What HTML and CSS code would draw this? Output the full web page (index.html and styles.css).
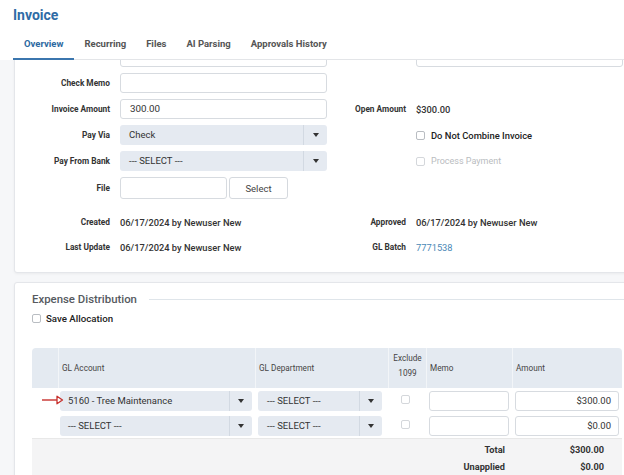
FILE: index.html
```html
<!DOCTYPE html>
<html lang="en">
<head>
<meta charset="utf-8">
<title>Invoice</title>
<link rel="stylesheet" href="styles.css">
</head>
<body>
<header class="top">
  <h1 class="title">Invoice</h1>
  <nav class="tabs">
    <span class="tab active">Overview</span>
    <span class="tab">Recurring</span>
    <span class="tab">Files</span>
    <span class="tab">AI Parsing</span>
    <span class="tab">Approvals History</span>
  </nav>
</header>

<main class="viewport">
  <section class="card details">
    <div class="form-grid">
      <span></span><div class="input"></div>
      <span></span><div class="input"></div>

      <span class="lbl">Check Memo</span><div class="input"></div>
      <span></span><span></span>

      <span class="lbl">Invoice Amount</span><div class="input">300.00</div>
      <span class="lbl">Open Amount</span><span class="val">$300.00</span>

      <span class="lbl">Pay Via</span>
      <div class="select"><span class="sel-val">Check</span><span class="caret-box"><i class="caret"></i></span></div>
      <span></span>
      <label class="check strong"><i class="box"></i>Do Not Combine Invoice</label>

      <span class="lbl">Pay From Bank</span>
      <div class="select"><span class="sel-val">--- SELECT ---</span><span class="caret-box"><i class="caret"></i></span></div>
      <span></span>
      <label class="check disabled"><i class="box"></i>Process Payment</label>

      <span class="lbl">File</span>
      <div class="file-row"><div class="input file-input"></div><button class="btn">Select</button></div>
      <span></span><span></span>
    </div>

    <div class="info-grid">
      <span class="lbl">Created</span><span class="val">06/17/2024 by Newuser New</span>
      <span class="lbl">Approved</span><span class="val">06/17/2024 by Newuser New</span>
      <span class="lbl">Last Update</span><span class="val">06/17/2024 by Newuser New</span>
      <span class="lbl">GL Batch</span><a class="link">7771538</a>
    </div>
  </section>

  <section class="card expense">
    <div class="legend"><span class="legend-text">Expense Distribution</span><span class="legend-line"></span></div>
    <label class="check save"><i class="box"></i>Save Allocation</label>

    <table class="dist">
      <colgroup>
        <col class="c0"><col class="c1"><col class="c2"><col class="c3"><col class="c4"><col class="c5">
      </colgroup>
      <thead>
        <tr>
          <th></th>
          <th>GL Account</th>
          <th>GL Department</th>
          <th class="center excl">Exclude<br>1099</th>
          <th>Memo</th>
          <th>Amount</th>
        </tr>
      </thead>
      <tbody>
        <tr>
          <td class="marker">
            <svg class="arrow" width="22" height="10" viewBox="0 0 22 10"><path d="M0 5H15" stroke="#c8302c" stroke-width="1.4" fill="none"/><path d="M15 1.2L20.5 5L15 8.8Z" stroke="#c8302c" stroke-width="1.3" fill="none" stroke-linejoin="round"/></svg>
          </td>
          <td class="acct"><div class="select"><span class="sel-val tight">5160 - Tree Maintenance</span><span class="caret-box"><i class="caret"></i></span></div></td>
          <td class="dept"><div class="select"><span class="sel-val">--- SELECT ---</span><span class="caret-box"><i class="caret"></i></span></div></td>
          <td class="center"><i class="box off"></i></td>
          <td><div class="input"></div></td>
          <td><div class="input num">$300.00</div></td>
        </tr>
        <tr>
          <td></td>
          <td class="acct"><div class="select"><span class="sel-val tight">--- SELECT ---</span><span class="caret-box"><i class="caret"></i></span></div></td>
          <td class="dept"><div class="select"><span class="sel-val">--- SELECT ---</span><span class="caret-box"><i class="caret"></i></span></div></td>
          <td class="center"><i class="box off"></i></td>
          <td><div class="input"></div></td>
          <td><div class="input num">$0.00</div></td>
        </tr>
      </tbody>
      <tfoot>
        <tr class="first">
          <td colspan="5" class="tot-label">Total</td>
          <td class="tot-val">$300.00</td>
        </tr>
        <tr>
          <td colspan="5" class="tot-label">Unapplied</td>
          <td class="tot-val">$0.00</td>
        </tr>
        <tr class="spacer"><td colspan="6"></td></tr>
      </tfoot>
    </table>
  </section>
</main>
</body>
</html>
```

FILE: styles.css
```css
* { box-sizing: border-box; }

html, body {
  margin: 0;
  padding: 0;
}

body {
  width: 624px;
  height: 475px;
  overflow: hidden;
  display: flex;
  flex-direction: column;
  background: #fff;
  color: #333;
  font-family: Roboto, "Liberation Sans", sans-serif;
  font-size: 9.5px;
}

/* ---------- header ---------- */
.top {
  padding-left: 13px;
  background: #fff;
  flex: none;
}

.title {
  margin: 0;
  padding-top: 6px;
  font-size: 14px;
  line-height: 19px;
  font-weight: bold;
  color: #2f6ca6;
}

.tabs {
  display: flex;
  padding-top: 4px;
  border-bottom: 1px solid #e3e5e8;
}

.tab {
  padding: 0 10px;
  line-height: 29px;
  font-size: 9.5px;
  font-weight: bold;
  color: #555;
  border-bottom: 2px solid transparent;
  margin-bottom: -1px;
}

.tab.active {
  padding: 0 11px;
  color: #2d69a1;
  border-bottom-color: #3b76ae;
}

/* ---------- scroll area ---------- */
.viewport {
  flex: 1;
  overflow: hidden;
  background: #f6f7f9;
  padding-left: 14px;
}

.card {
  width: 640px;
  background: #fff;
  border: 1px solid #e4e6ea;
  border-radius: 3px;
  box-shadow: 0 1px 3px rgba(0, 0, 0, 0.05);
}

.details {
  margin-top: -26px;
  padding: 12px 0 15px 0;
}

.form-grid,
.info-grid {
  display: grid;
  grid-template-columns: 95px 207px 69px 207px;
  column-gap: 10px;
  align-items: center;
}

.form-grid {
  grid-template-rows: 20px 20px 20px 20px 20px 22px;
  row-gap: 6px;
}

.info-grid {
  margin-top: 13px;
  grid-auto-rows: 20px;
  row-gap: 5px;
}

.lbl {
  text-align: right;
  font-size: 8.3px;
  font-weight: bold;
  color: #333;
  white-space: nowrap;
}

.val {
  font-size: 9.3px;
  font-weight: 500;
  color: #333;
  white-space: nowrap;
}

.link {
  font-size: 9.3px;
  color: #4a88b6;
}

.input {
  height: 20px;
  border: 1px solid #d7dbe0;
  border-radius: 3px;
  background: #fff;
  padding-left: 9px;
  line-height: 18px;
  font-size: 9.8px;
  color: #333;
}

.input.num {
  text-align: right;
  padding: 0 7px 0 0;
  font-size: 9.5px;
}

.select {
  display: flex;
  height: 20px;
  background: #e5eaf1;
  border-radius: 3px;
}

.sel-val {
  flex: 1;
  padding-left: 9px;
  line-height: 20px;
  font-size: 9.5px;
  color: #333;
  white-space: nowrap;
  overflow: hidden;
}

.sel-val.tight { padding-left: 8px; }

.caret-box {
  flex: none;
  width: 24px;
  border-left: 1px solid #d2d9e2;
  display: flex;
  align-items: center;
  justify-content: center;
}

.caret {
  width: 0;
  height: 0;
  border-left: 3px solid transparent;
  border-right: 3px solid transparent;
  border-top: 4px solid #333;
}

.file-row {
  display: flex;
  gap: 2px;
  height: 22px;
}

.file-input {
  width: 107px;
  height: 22px;
}

.btn {
  width: 59px;
  height: 22px;
  border: 1px solid #d5d9de;
  border-radius: 3px;
  background: #fff;
  font-family: inherit;
  font-size: 9.5px;
  color: #444;
  padding: 0;
}

/* ---------- checkboxes ---------- */
.check {
  display: flex;
  align-items: center;
  gap: 6px;
  font-size: 9.4px;
  white-space: nowrap;
}

.check.strong {
  font-weight: 500;
  color: #222;
}

.check.disabled {
  color: #b9bcc0;
  font-size: 9px;
}

.box {
  display: inline-block;
  flex: none;
  width: 9px;
  height: 9px;
  border: 1px solid #b9bdc2;
  border-radius: 2px;
  background: #fff;
}

.box.off,
.check.disabled .box {
  border-color: #d4d7db;
}

/* ---------- expense card ---------- */
.expense {
  margin-top: 9px;
  padding: 8px 0 0 17px;
  height: 400px;
}

.legend {
  display: flex;
  align-items: center;
  gap: 12px;
  height: 16px;
}

.legend-text {
  font-size: 11.4px;
  font-weight: 500;
  color: #565a5f;
}

.legend-line {
  flex: 1;
  border-top: 1px solid #dfe5ea;
}

.check.save {
  margin-top: 3px;
  height: 16px;
  gap: 5px;
  font-size: 9.7px;
  font-weight: 500;
  color: #222;
}

.dist {
  margin-top: 22px;
  width: 590px;
  table-layout: fixed;
  border-collapse: separate;
  border-spacing: 0;
}

.c0 { width: 26px; }
.c1 { width: 197px; }
.c2 { width: 133px; }
.c3 { width: 38px; }
.c4 { width: 86px; }
.c5 { width: 110px; }

.dist th {
  height: 40px;
  background: #e4eaf1;
  font-weight: normal;
  font-size: 8.2px;
  color: #444;
  text-align: left;
  padding: 0 3px;
  border-left: 1px solid #f2f5f8;
  line-height: 13px;
}

.dist th.excl {
  line-height: 15px;
  padding-bottom: 5px;
}

.dist th:first-child {
  border-left: none;
  border-top-left-radius: 4px;
}

.dist th:last-child { border-top-right-radius: 4px; }

.dist .center { text-align: center; }

.dist td {
  height: 25px;
  padding: 0 3px;
  vertical-align: middle;
  background: #fff;
}

.dist td.acct { padding: 0 3px 0 2px; }
.dist td.acct .caret-box { width: 23px; }
.dist td.dept { padding: 0 6px 0 3px; }
.dist td.dept .caret-box { width: 23px; }
.dist td.center { padding-right: 6px; }

.marker {
  position: relative;
}

.arrow {
  position: absolute;
  left: 10px;
  top: 7px;
}

.dist tfoot td {
  background: #f4f4f5;
  height: auto;
  line-height: 17px;
  font-weight: bold;
  font-size: 9.2px;
  color: #333;
}

.dist tfoot tr.first td {
  border-top: 1px solid #e8e8e8;
  padding-top: 2px;
}

.tot-label {
  text-align: right;
  padding-right: 7px !important;
}

.tot-val {
  text-align: right;
  padding-right: 18px !important;
}

.dist tfoot tr.spacer td { height: 30px; }
```
